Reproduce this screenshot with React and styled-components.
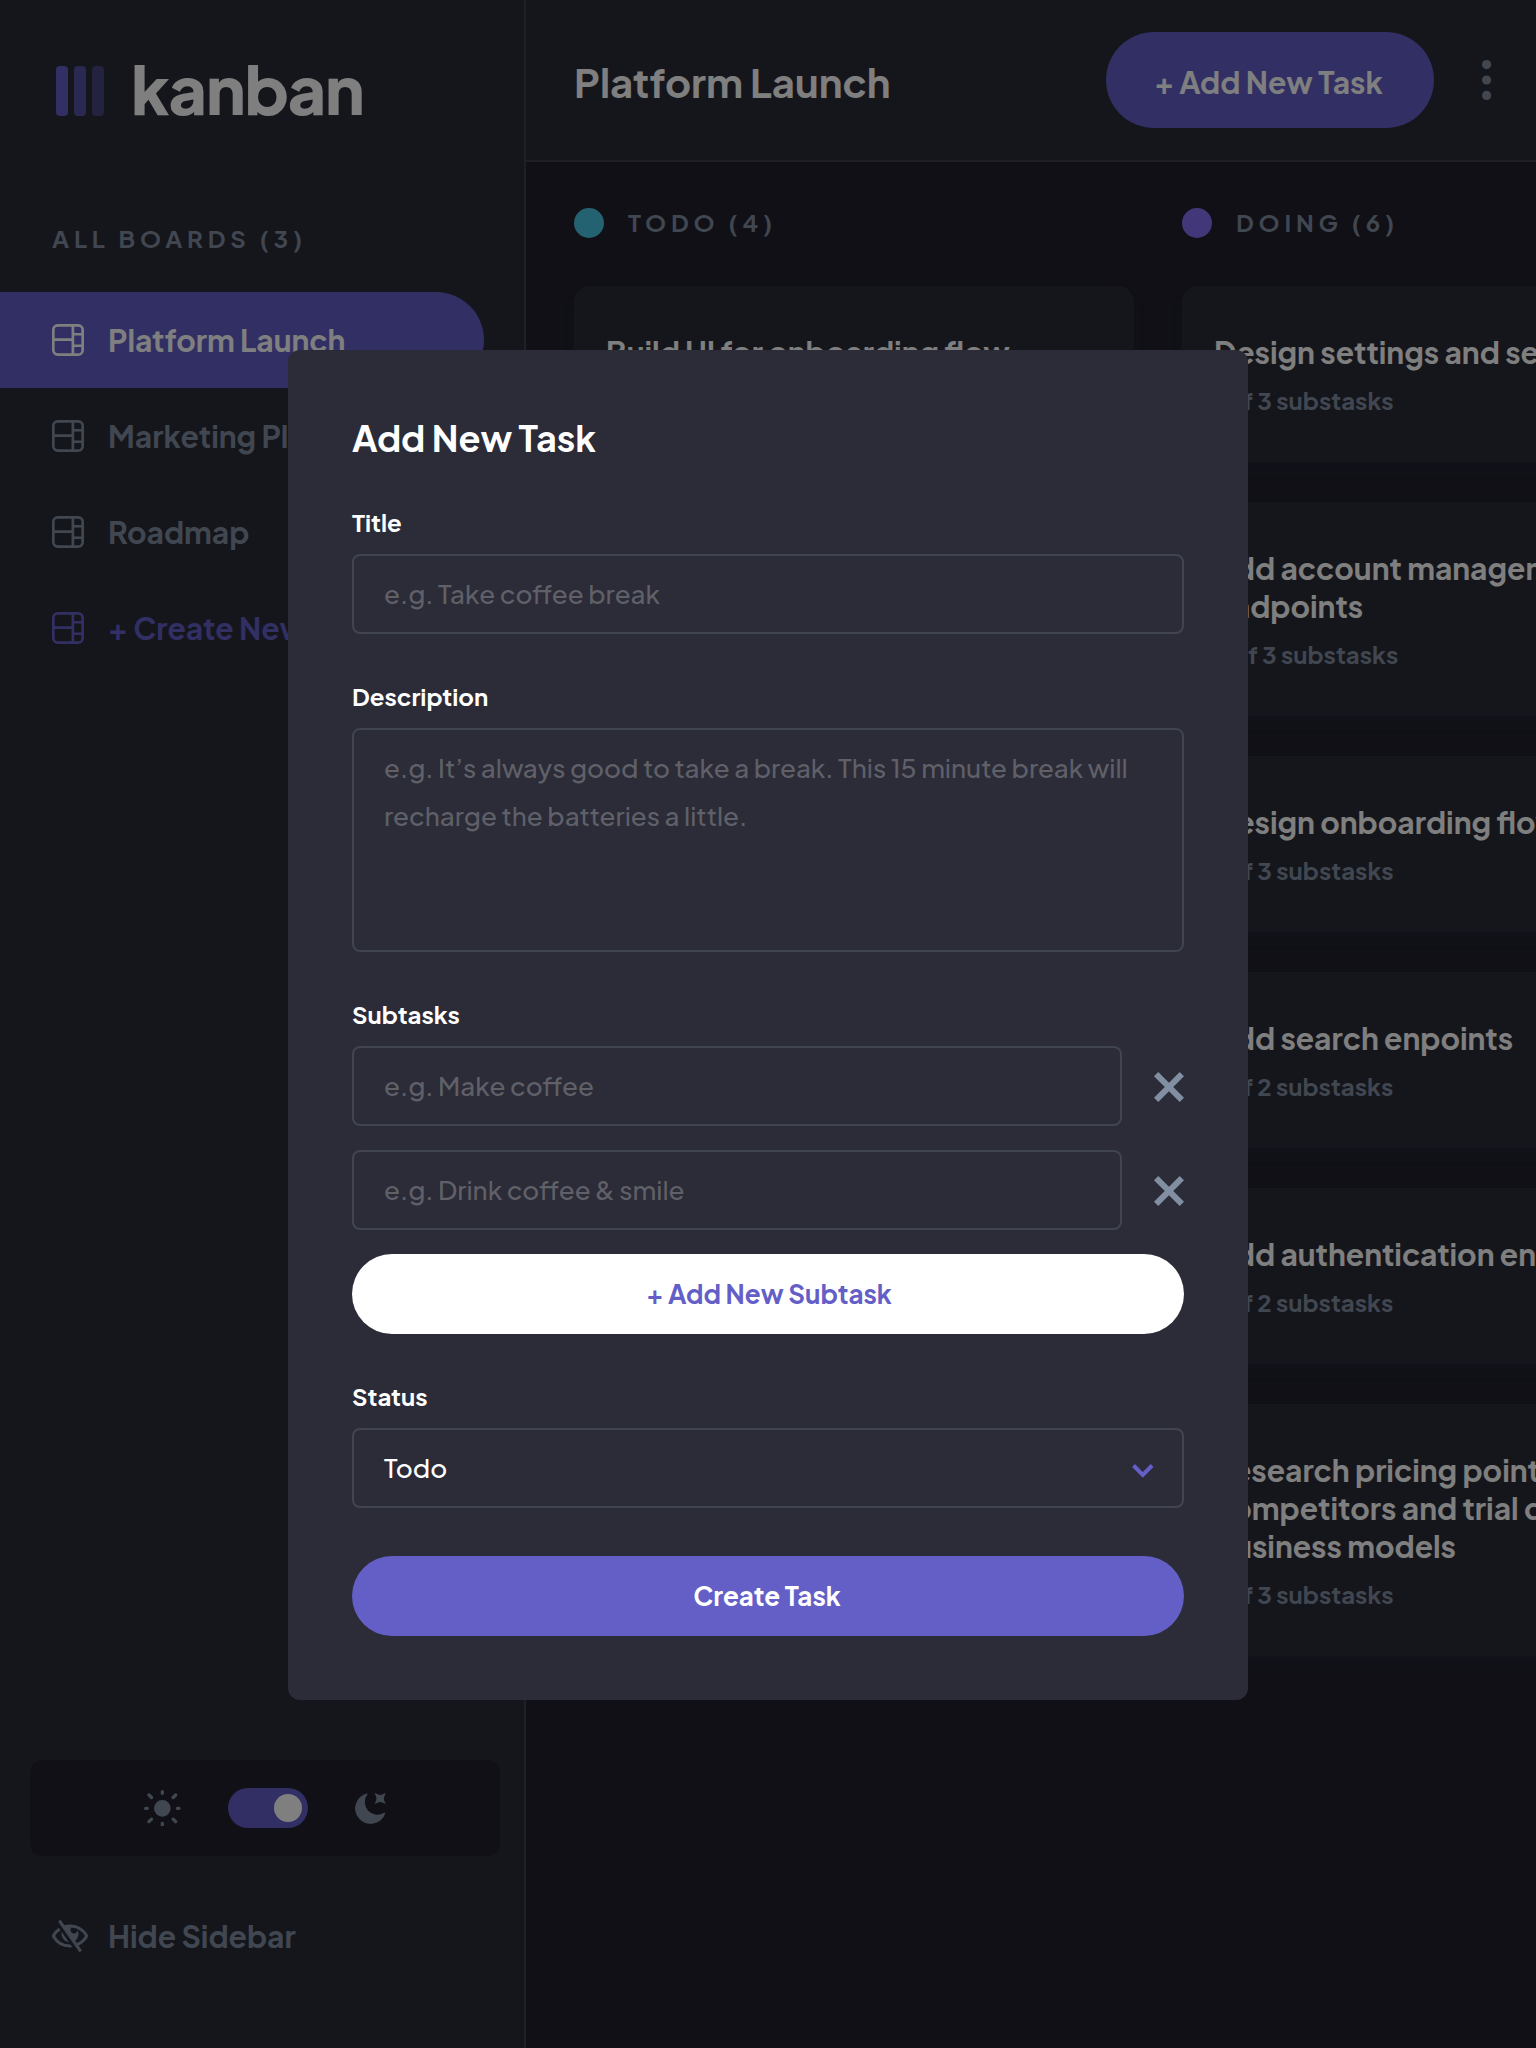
import React from "react";
import styled, { createGlobalStyle, css } from "styled-components";

const color = {
  purple: "#635fc7",
  sidebar: "#2b2c37",
  board: "#20212c",
  line: "#3e3f4e",
  muted: "#828fa3",
};

const GlobalStyle = createGlobalStyle`
  *, *::before, *::after { box-sizing: border-box; }
  html, body { margin: 0; background: ${color.board}; }
  body {
    overflow: hidden;
    color: #fff;
    font-family: "Plus Jakarta Sans", Inter, "Noto Sans", sans-serif;
    -webkit-font-smoothing: antialiased;
  }
  h1, h2, h3, p { margin: 0; }
  button, input, textarea { font-family: inherit; margin: 0; }
  svg { display: block; flex-shrink: 0; }
`;

/* ---------- page shell ---------- */

const Page = styled.div`
  position: relative;
  display: flex;
  width: 1536px;
  height: 2048px;
  overflow: hidden;
  background: ${color.board};
`;

const Sidebar = styled.aside`
  display: flex;
  flex-direction: column;
  flex: 0 0 526px;
  padding-bottom: 64px;
  background: ${color.sidebar};
  border-right: 2px solid ${color.line};
`;

const Brand = styled.div`
  display: flex;
  align-items: center;
  height: 182px;
  padding: 0 0 0 56px;
`;

const Bars = styled.div`
  display: flex;
  gap: 6px;
`;

const Bar = styled.span`
  width: 12px;
  height: 50px;
  border-radius: 4px;
  background: ${color.purple};
  opacity: ${(p) => p.$fade};
`;

const Wordmark = styled.span`
  margin: -7px 0 0 27px;
  font-size: 66px;
  font-weight: 800;
  line-height: 80px;
  letter-spacing: -1.1px;
`;

const SidebarLabel = styled.h2`
  height: 110px;
  padding: 41px 0 0 52px;
  font-size: 24px;
  font-weight: 700;
  line-height: 30px;
  letter-spacing: 4.8px;
  color: ${color.muted};
`;

const Nav = styled.nav`
  display: flex;
  flex-direction: column;
  flex: 1;
`;

const NavItem = styled.button`
  display: flex;
  align-items: center;
  gap: ${(p) => p.$gap || 24}px;
  width: 484px;
  height: 96px;
  padding: 0 0 0 52px;
  border: 0;
  border-radius: 0 48px 48px 0;
  background: ${(p) => (p.$active ? color.purple : "transparent")};
  color: ${(p) => (p.$active ? "#fff" : p.$accent ? color.purple : color.muted)};
  font-size: 30px;
  font-weight: 700;
  line-height: 38px;
  white-space: nowrap;
  text-align: left;
`;

const ThemeBox = styled.div`
  display: flex;
  align-items: center;
  justify-content: center;
  gap: 47px;
  width: 470px;
  height: 96px;
  margin: 0 0 32px 30px;
  border-radius: 12px;
  background: ${color.board};
  color: ${color.muted};
`;

const Toggle = styled.span`
  display: flex;
  align-items: center;
  justify-content: flex-end;
  width: 80px;
  height: 40px;
  padding: 6px;
  border-radius: 20px;
  background: ${color.purple};
`;

const Knob = styled.span`
  width: 28px;
  height: 28px;
  border-radius: 50%;
  background: #fff;
`;

const Main = styled.main`
  display: flex;
  flex-direction: column;
  flex: 1;
  min-width: 0;
`;

const Header = styled.header`
  display: flex;
  align-items: center;
  height: 162px;
  flex-shrink: 0;
  padding: 0 44px 0 48px;
  background: ${color.sidebar};
  border-bottom: 2px solid ${color.line};
`;

const BoardTitle = styled.h1`
  flex: 1;
  padding-top: 3px;
  font-size: 40px;
  font-weight: 700;
  line-height: 50px;
`;

const HeaderButton = styled.button`
  width: 328px;
  height: 96px;
  margin-right: 48px;
  padding: 3px 3px 0 0;
  border: 0;
  border-radius: 48px;
  background: ${color.purple};
  color: #fff;
  font-size: 30px;
  font-weight: 700;
  line-height: 38px;
  white-space: nowrap;
`;

const Board = styled.div`
  display: flex;
  gap: 48px;
  flex: 1;
  padding: 46px 48px;
  overflow: hidden;
`;

const Column = styled.section`
  display: flex;
  flex-direction: column;
  flex: 0 0 560px;
`;

const ColumnHead = styled.h2`
  display: flex;
  align-items: flex-start;
  gap: 24px;
  height: 30px;
  margin: 0 0 48px;
  font-size: 24px;
  font-weight: 700;
  line-height: 28px;
  letter-spacing: 4.8px;
  color: ${color.muted};
`;

const Dot = styled.span`
  width: 30px;
  height: 30px;
  border-radius: 50%;
  background: ${(p) => p.$color};
`;

const Cards = styled.div`
  display: flex;
  flex-direction: column;
  gap: 40px;
`;

const Card = styled.article`
  padding: 47px 32px;
  border-radius: 16px;
  background: ${color.sidebar};
  box-shadow: 0 8px 12px rgba(54, 78, 126, 0.1);
`;

const CardTitle = styled.h3`
  font-size: 30px;
  font-weight: 700;
  line-height: 38px;
`;

const CardMeta = styled.p`
  margin-top: 14px;
  font-size: 24px;
  font-weight: 700;
  line-height: 30px;
  color: ${color.muted};
`;

/* ---------- modal ---------- */

const Overlay = styled.div`
  position: absolute;
  inset: 0;
  display: flex;
  justify-content: center;
  align-items: flex-start;
  padding-top: 350px;
  background: rgba(0, 0, 0, 0.5);
`;

const Modal = styled.form`
  display: flex;
  flex-direction: column;
  gap: 48px;
  width: 960px;
  padding: 64px;
  border-radius: 12px;
  background: ${color.sidebar};
`;

const ModalTitle = styled.h2`
  padding-top: 2px;
  font-size: 36px;
  font-weight: 700;
  line-height: 44px;
`;

const Field = styled.div`
  display: flex;
  flex-direction: column;
`;

const Label = styled.span`
  margin-bottom: 18px;
  font-size: 24px;
  font-weight: 700;
  line-height: 28px;
`;

const control = css`
  display: block;
  width: 100%;
  min-width: 0;
  border: 2px solid rgba(130, 143, 163, 0.25);
  border-radius: 8px;
  outline: 0;
  background: transparent;
  color: #fff;
  font-size: 26px;
  font-weight: 500;
  &::placeholder {
    color: rgba(255, 255, 255, 0.25);
    opacity: 1;
  }
`;

const Input = styled.input`
  ${control}
  height: 80px;
  padding: 0 30px 2px;
`;

const TextArea = styled.textarea`
  ${control}
  height: 224px;
  padding: 14px 30px;
  line-height: 48px;
  resize: none;
`;

const Select = styled.div`
  ${control}
  display: flex;
  align-items: center;
  justify-content: space-between;
  height: 80px;
  padding: 0 28px 2px 30px;
  svg { margin-top: 7px; }
`;

const Stack = styled.div`
  display: flex;
  flex-direction: column;
  gap: 24px;
`;

const SubtaskRow = styled.div`
  display: flex;
  align-items: center;
  gap: 32px;
  svg { margin-top: 1px; }
`;

const PillButton = styled.button`
  height: 80px;
  padding: ${(p) => (p.$light ? "0 0 0 2px" : "0 2px 0 0")};
  border: 0;
  border-radius: 40px;
  background: ${(p) => (p.$light ? "#fff" : color.purple)};
  color: ${(p) => (p.$light ? color.purple : "#fff")};
  font-size: 26px;
  font-weight: 700;
  line-height: 46px;
`;

/* ---------- icons ---------- */

const BoardIcon = () => (
  <svg width="32" height="32" viewBox="0 0 16 16" fill="currentColor">
    <path d="M0 2.889A2.889 2.889 0 0 1 2.889 0H13.11A2.889 2.889 0 0 1 16 2.889V13.11A2.888 2.888 0 0 1 13.111 16H2.89A2.889 2.889 0 0 1 0 13.111V2.89Zm1.333 5.555v4.667c0 .859.697 1.556 1.556 1.556h6.889V8.444H1.333Zm8.445-1.333V1.333h-6.89A1.556 1.556 0 0 0 1.334 2.89V7.11h8.445Zm4.889-1.333H11.11v4.444h3.556V5.778Zm0 5.778H11.11v3.11h2a1.556 1.556 0 0 0 1.556-1.555v-1.555Zm0-7.112V2.89a1.555 1.555 0 0 0-1.556-1.556h-2v3.111h3.556Z" />
  </svg>
);

const SunIcon = () => (
  <svg width="36.67" height="36.67" viewBox="0 0 18.333 18.333" fill="currentColor">
    <path d="M9.167 15.833a.833.833 0 0 1 .833.834v.833a.833.833 0 0 1-1.667 0v-.833a.833.833 0 0 1 .834-.834ZM3.75 13.75a.833.833 0 0 1 .59 1.422l-1.25 1.25a.833.833 0 0 1-1.18-1.178l1.25-1.25a.833.833 0 0 1 .59-.244Zm10.833 0c.221 0 .433.088.59.244l1.25 1.25a.833.833 0 0 1-1.179 1.178l-1.25-1.25a.833.833 0 0 1 .59-1.422ZM9.167 5a4.167 4.167 0 1 1 0 8.334 4.167 4.167 0 0 1 0-8.334Zm-7.5 3.333a.833.833 0 0 1 0 1.667H.833a.833.833 0 1 1 0-1.667h.834Zm15.833 0a.833.833 0 0 1 0 1.667h-.833a.833.833 0 0 1 0-1.667h.833Zm-1.667-6.666a.833.833 0 0 1 .59 1.422l-1.25 1.25a.833.833 0 1 1-1.179-1.178l1.25-1.25a.833.833 0 0 1 .59-.244Zm-13.333 0c.221 0 .433.088.59.244l1.25 1.25a.833.833 0 0 1-1.18 1.178L1.91 3.09a.833.833 0 0 1 .59-1.422ZM9.167 0A.833.833 0 0 1 10 .833v.834a.833.833 0 1 1-1.667 0V.833A.833.833 0 0 1 9.167 0Z" />
  </svg>
);

const MoonIcon = () => (
  <svg width="31" height="31" viewBox="0 0 31 31" fill="currentColor" stroke="currentColor" strokeWidth="1.2" strokeLinejoin="round">
    <path d="M12 1A14.8 14.8 0 1 0 29.6 20.2A13.2 13.2 0 0 1 12 1Z" />
    <path d="M20.5.8Q25.2 4.2 29.9.8Q26.5 5.4 29.9 10.1Q25.2 6.8 20.5 10.1Q23.8 5.4 20.5.8Z" />
  </svg>
);

const HideIcon = () => (
  <svg width="36" height="32" viewBox="0 0 18 16" fill="currentColor">
    <path d="M8.522 11.223a4.252 4.252 0 0 1-3.654-5.22l3.654 5.22ZM9 12.25A8.685 8.685 0 0 1 1.5 8a8.612 8.612 0 0 1 2.76-2.864l-.86-1.23A10.112 10.112 0 0 0 .208 7.238a1.5 1.5 0 0 0 0 1.524A10.187 10.187 0 0 0 9 13.75c.414 0 .828-.025 1.239-.074l-1-1.43A8.88 8.88 0 0 1 9 12.25Zm8.792-3.488a10.14 10.14 0 0 1-4.486 4.046l1.504 2.148a.375.375 0 0 1-.092.523l-.648.453a.375.375 0 0 1-.523-.092L3.19 1.044A.375.375 0 0 1 3.282.52L3.93.068a.375.375 0 0 1 .523.092l1.735 2.479A10.308 10.308 0 0 1 9 2.25c3.746 0 7.031 2 8.792 4.988a1.5 1.5 0 0 1 0 1.524ZM16.5 8a8.674 8.674 0 0 0-6.755-4.219A1.75 1.75 0 1 0 12.75 5v-.001a4.25 4.25 0 0 1-1.154 5.366l.834 1.192A8.641 8.641 0 0 0 16.5 8Z" />
  </svg>
);

const DotsIcon = () => (
  <svg width="10" height="40" viewBox="0 0 10 40" fill={color.muted}>
    <circle cx="4.6" cy="4.6" r="4.6" />
    <circle cx="4.6" cy="20" r="4.6" />
    <circle cx="4.6" cy="35.4" r="4.6" />
  </svg>
);

const CrossIcon = () => (
  <svg width="30" height="30" viewBox="0 0 14.85 14.85" fill={color.muted}>
    <path d="m12.728 0 2.122 2.122L2.122 14.85 0 12.728z" />
    <path d="M0 2.122 2.122 0 14.85 12.728l-2.122 2.122z" />
  </svg>
);

const ChevronIcon = () => (
  <svg width="22" height="14" viewBox="0 0 22 14" fill="none" stroke={color.purple} strokeWidth="4">
    <path d="M1.5 1.5 10.8 10.8 20.1 1.5" />
  </svg>
);

/* ---------- data ---------- */

const columns = [
  {
    name: "TODO",
    color: "#49c4e5",
    tasks: [
      ["Build UI for onboarding flow", 0, 3],
      ["Build UI for search", 0, 1],
      ["Build settings UI", 0, 2],
      ["QA and test all major user journeys", 0, 2],
    ],
  },
  {
    name: "DOING",
    color: "#8471f2",
    tasks: [
      ["Design settings and search pages", 1, 3],
      ["Add account management endpoints", 2, 3],
      ["Design onboarding flow", 1, 3],
      ["Add search enpoints", 1, 2],
      ["Add authentication endpoints", 1, 2],
      ["Research pricing points of various competitors and trial different business models", 1, 3],
    ],
  },
];

const subtasks = ["e.g. Make coffee", "e.g. Drink coffee & smile"];

export default function App() {
  return (
    <>
      <GlobalStyle />
      <Page>
        <Sidebar>
          <Brand>
            <Bars>
              <Bar $fade={1} />
              <Bar $fade={0.75} />
              <Bar $fade={0.5} />
            </Bars>
            <Wordmark>kanban</Wordmark>
          </Brand>
          <SidebarLabel>ALL BOARDS (3)</SidebarLabel>
          <Nav>
            <NavItem $active><BoardIcon />Platform Launch</NavItem>
            <NavItem><BoardIcon />Marketing Plan</NavItem>
            <NavItem><BoardIcon />Roadmap</NavItem>
            <NavItem $accent><BoardIcon />+ Create New Board</NavItem>
          </Nav>
          <ThemeBox>
            <SunIcon />
            <Toggle><Knob /></Toggle>
            <MoonIcon />
          </ThemeBox>
          <NavItem $gap={20}><HideIcon />Hide Sidebar</NavItem>
        </Sidebar>

        <Main>
          <Header>
            <BoardTitle>Platform Launch</BoardTitle>
            <HeaderButton>+ Add New Task</HeaderButton>
            <DotsIcon />
          </Header>
          <Board>
            {columns.map((col) => (
              <Column key={col.name}>
                <ColumnHead>
                  <Dot $color={col.color} />
                  {col.name} ({col.tasks.length})
                </ColumnHead>
                <Cards>
                  {col.tasks.map(([title, done, total]) => (
                    <Card key={title}>
                      <CardTitle>{title}</CardTitle>
                      <CardMeta>{`${done} of ${total} substasks`}</CardMeta>
                    </Card>
                  ))}
                </Cards>
              </Column>
            ))}
          </Board>
        </Main>

        <Overlay>
          <Modal>
            <ModalTitle>Add New Task</ModalTitle>
            <Field>
              <Label>Title</Label>
              <Input placeholder="e.g. Take coffee break" />
            </Field>
            <Field>
              <Label>Description</Label>
              <TextArea placeholder="e.g. It’s always good to take a break. This 15 minute break will recharge the batteries a little." />
            </Field>
            <Field>
              <Label>Subtasks</Label>
              <Stack>
                {subtasks.map((hint) => (
                  <SubtaskRow key={hint}>
                    <Input placeholder={hint} />
                    <CrossIcon />
                  </SubtaskRow>
                ))}
                <PillButton type="button" $light>+ Add New Subtask</PillButton>
              </Stack>
            </Field>
            <Field>
              <Label>Status</Label>
              <Select>Todo<ChevronIcon /></Select>
            </Field>
            <PillButton type="button">Create Task</PillButton>
          </Modal>
        </Overlay>
      </Page>
    </>
  );
}
